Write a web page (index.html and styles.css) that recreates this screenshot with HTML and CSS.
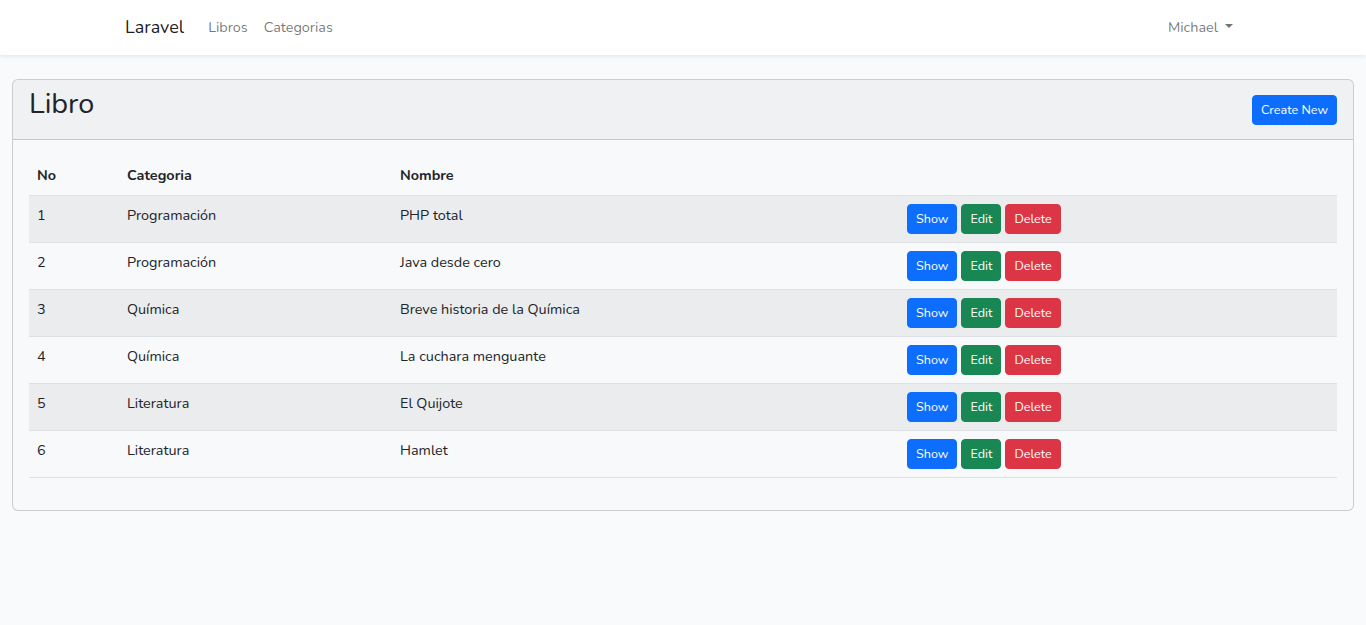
FILE: index.html
```html
<!DOCTYPE html>
<html lang="es">
<head>
<meta charset="utf-8">
<title>Laravel</title>
<link rel="stylesheet" href="styles.css">
</head>
<body>
<nav class="navbar">
  <div class="container nav-inner">
    <a class="brand" href="#">Laravel</a>
    <ul class="nav-left">
      <li><a class="nav-link" href="#">Libros</a></li>
      <li><a class="nav-link" href="#">Categorias</a></li>
    </ul>
    <ul class="nav-right">
      <li><a class="nav-link dropdown-toggle" href="#">Michael</a></li>
    </ul>
  </div>
</nav>
<main class="main">
  <div class="container-fluid">
    <div class="card">
      <div class="card-header">
        <span class="card-title">Libro</span>
        <a class="btn btn-primary" href="#">Create New</a>
      </div>
      <div class="card-body">
        <table class="table">
          <thead>
            <tr><th class="c1">No</th><th class="c2">Categoria</th><th class="c3">Nombre</th><th class="c4"></th></tr>
          </thead>
          <tbody>
            <tr><td>1</td><td>Programación</td><td>PHP total</td><td><div class="actions"><a class="btn btn-primary">Show</a><a class="btn btn-success">Edit</a><button class="btn btn-danger">Delete</button></div></td></tr>
            <tr><td>2</td><td>Programación</td><td>Java desde cero</td><td><div class="actions"><a class="btn btn-primary">Show</a><a class="btn btn-success">Edit</a><button class="btn btn-danger">Delete</button></div></td></tr>
            <tr><td>3</td><td>Química</td><td>Breve historia de la Química</td><td><div class="actions"><a class="btn btn-primary">Show</a><a class="btn btn-success">Edit</a><button class="btn btn-danger">Delete</button></div></td></tr>
            <tr><td>4</td><td>Química</td><td>La cuchara menguante</td><td><div class="actions"><a class="btn btn-primary">Show</a><a class="btn btn-success">Edit</a><button class="btn btn-danger">Delete</button></div></td></tr>
            <tr><td>5</td><td>Literatura</td><td>El Quijote</td><td><div class="actions"><a class="btn btn-primary">Show</a><a class="btn btn-success">Edit</a><button class="btn btn-danger">Delete</button></div></td></tr>
            <tr><td>6</td><td>Literatura</td><td>Hamlet</td><td><div class="actions"><a class="btn btn-primary">Show</a><a class="btn btn-success">Edit</a><button class="btn btn-danger">Delete</button></div></td></tr>
          </tbody>
        </table>
      </div>
    </div>
  </div>
</main>
</body>
</html>
```
FILE: styles.css
```css
* { box-sizing: border-box; }
html, body { margin: 0; padding: 0; }
body {
  font-family: "Nunito", "Lato", "Noto Sans", sans-serif;
  font-size: 14.4px;
  line-height: 1.6;
  color: #212529;
  background: #f8fafc;
}
a { text-decoration: none; }
ul { list-style: none; margin: 0; padding: 0; }

.navbar {
  background: #fff;
  padding: 8px 0;
  box-shadow: 0 .125rem .25rem rgba(0,0,0,.075);
  position: relative;
}
.container {
  width: 1140px;
  margin: 0 auto;
  padding: 0 12px;
}
.nav-inner { display: flex; align-items: center; }
.brand {
  font-size: 18px;
  color: rgba(0,0,0,.9);
  padding: 5px 0;
  margin-right: 16px;
  line-height: 1.6;
}
.nav-left { display: flex; flex: 1; }
.nav-right { display: flex; }
.nav-link {
  display: block;
  padding: 8px 8px;
  color: rgba(0,0,0,.55);
}
.dropdown-toggle::after {
  content: "";
  display: inline-block;
  margin-left: 7px;
  vertical-align: .255em;
  border-top: .3em solid;
  border-right: .3em solid transparent;
  border-left: .3em solid transparent;
  border-bottom: 0;
}

.main { padding: 24px 0; }
.container-fluid { padding: 0 12px; }
.card {
  border: 1px solid rgba(0,0,0,.175);
  border-radius: 6px;
  background: #f8f9fa;
  overflow: hidden;
}
.card-header {
  background: rgba(0,0,0,.03);
  border-bottom: 1px solid rgba(0,0,0,.175);
  padding: 7px 16px 6px;
  min-height: 60px;
  display: flex;
  justify-content: space-between;
  align-items: flex-start;
}
.card-title { font-size: 28.8px; line-height: 1.2; }
.card-header .btn { align-self: center; }
.card-body { padding: 16px; }

.btn {
  display: inline-block;
  font-family: inherit;
  font-size: 12.6px;
  line-height: 20px;
  padding: 4px 8px;
  border: 1px solid transparent;
  border-radius: 4px;
  color: #fff;
  cursor: pointer;
}
.btn-primary { background: #0d6efd; border-color: #0d6efd; }
.btn-success { background: #198754; border-color: #198754; }
.btn-danger { background: #dc3545; border-color: #dc3545; }

.table {
  width: 100%;
  border-collapse: collapse;
  margin-bottom: 16px;
  color: #212529;
}
.table th, .table td {
  padding: 8px;
  text-align: left;
  vertical-align: top;
  border-bottom: 1px solid #dee2e6;
}
.table th { font-weight: 700; vertical-align: bottom; }
.c1 { width: 90px; }
.c2 { width: 273px; }
.c3 { width: 507px; }
.table tbody tr:nth-child(odd) td { background: rgba(0,0,0,.05); }
.actions { display: flex; gap: 4px; }
```
